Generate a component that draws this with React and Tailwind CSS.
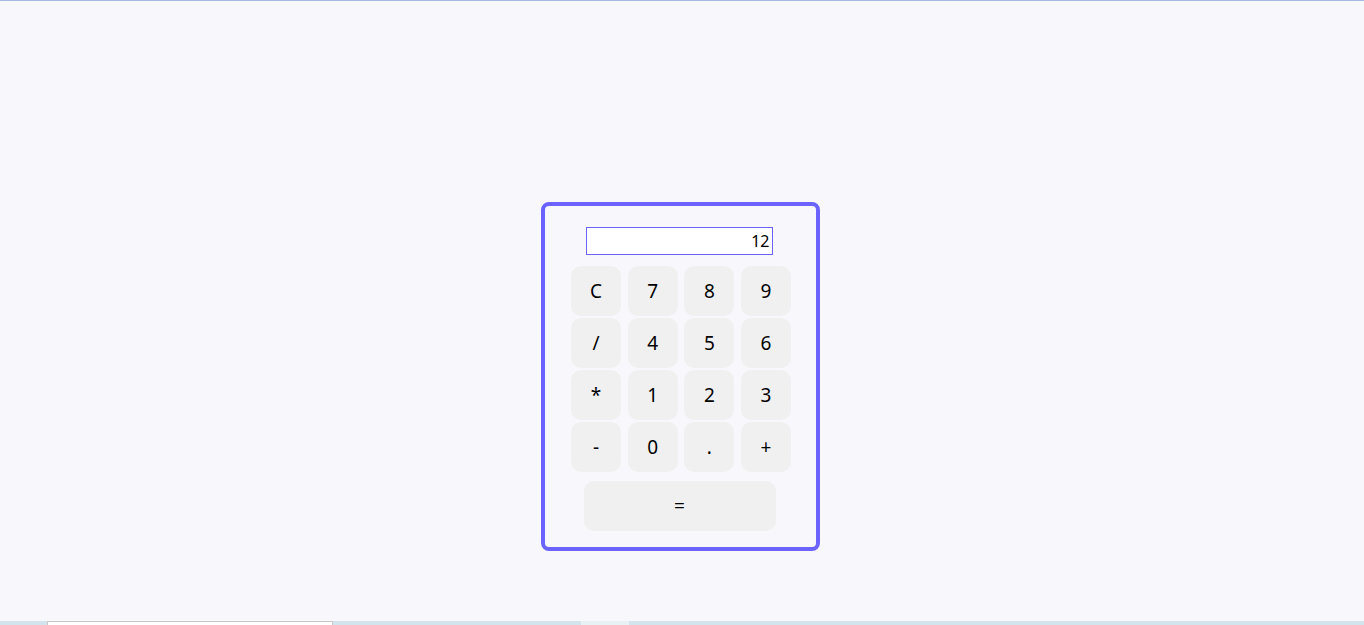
import React, { useState } from 'react';

const keys = ['C', '7', '8', '9', '/', '4', '5', '6', '*', '1', '2', '3', '-', '0', '.', '+'];

export default function App() {
  const [value, setValue] = useState('12');

  const press = (k) => {
    if (k === 'C') return setValue('');
    setValue((v) => v + k);
  };

  const solve = () => {
    try {
      // eslint-disable-next-line no-new-func
      setValue(String(Function(`return (${value})`)()));
    } catch {
      setValue('Error');
    }
  };

  return (
    <div className="h-[625px] flex flex-col bg-[#f8f7fc] font-['Noto_Sans','Open_Sans',sans-serif] text-black overflow-hidden">
      <div className="h-px bg-[#a7badf]" />

      {/* page */}
      <div className="flex-1 pt-[201px] pl-[541px]">
        <div className="w-[279px] h-[349px] border-4 border-[#6c63ff] rounded-[8px] flex flex-col items-center pt-[21px]">
          <input
            value={value}
            onChange={(e) => setValue(e.target.value)}
            className="w-[187px] h-[28px] ml-[-3px] border border-[#6c63ff] bg-white text-right text-[16px] pr-[2px] outline-none"
          />

          <div className="mt-[11px] w-[220px] grid grid-cols-[50px_50px_50px_50px] justify-between gap-y-[2px] ml-[1px]">
            {keys.map((k) => (
              <button
                key={k}
                onClick={() => press(k)}
                className="w-[50px] h-[50px] rounded-[10px] bg-[#f0f0f0] text-[19px] flex items-center justify-center"
              >
                {k}
              </button>
            ))}
          </div>

          <button
            onClick={solve}
            className="mt-[9px] ml-[-2px] w-[192px] h-[50px] rounded-[10px] bg-[#f0f0f0] text-[19px] flex items-center justify-center"
          >
            =
          </button>
        </div>
      </div>

      {/* bottom strip */}
      <div className="h-[4px] flex bg-[#d3e4ec]">
        <div className="ml-[47px] w-[286px] bg-white border-t border-x border-[#c8c8c8]" />
        <div className="ml-[248px] w-[48px] bg-[#e8f1f4]" />
      </div>
    </div>
  );
}
